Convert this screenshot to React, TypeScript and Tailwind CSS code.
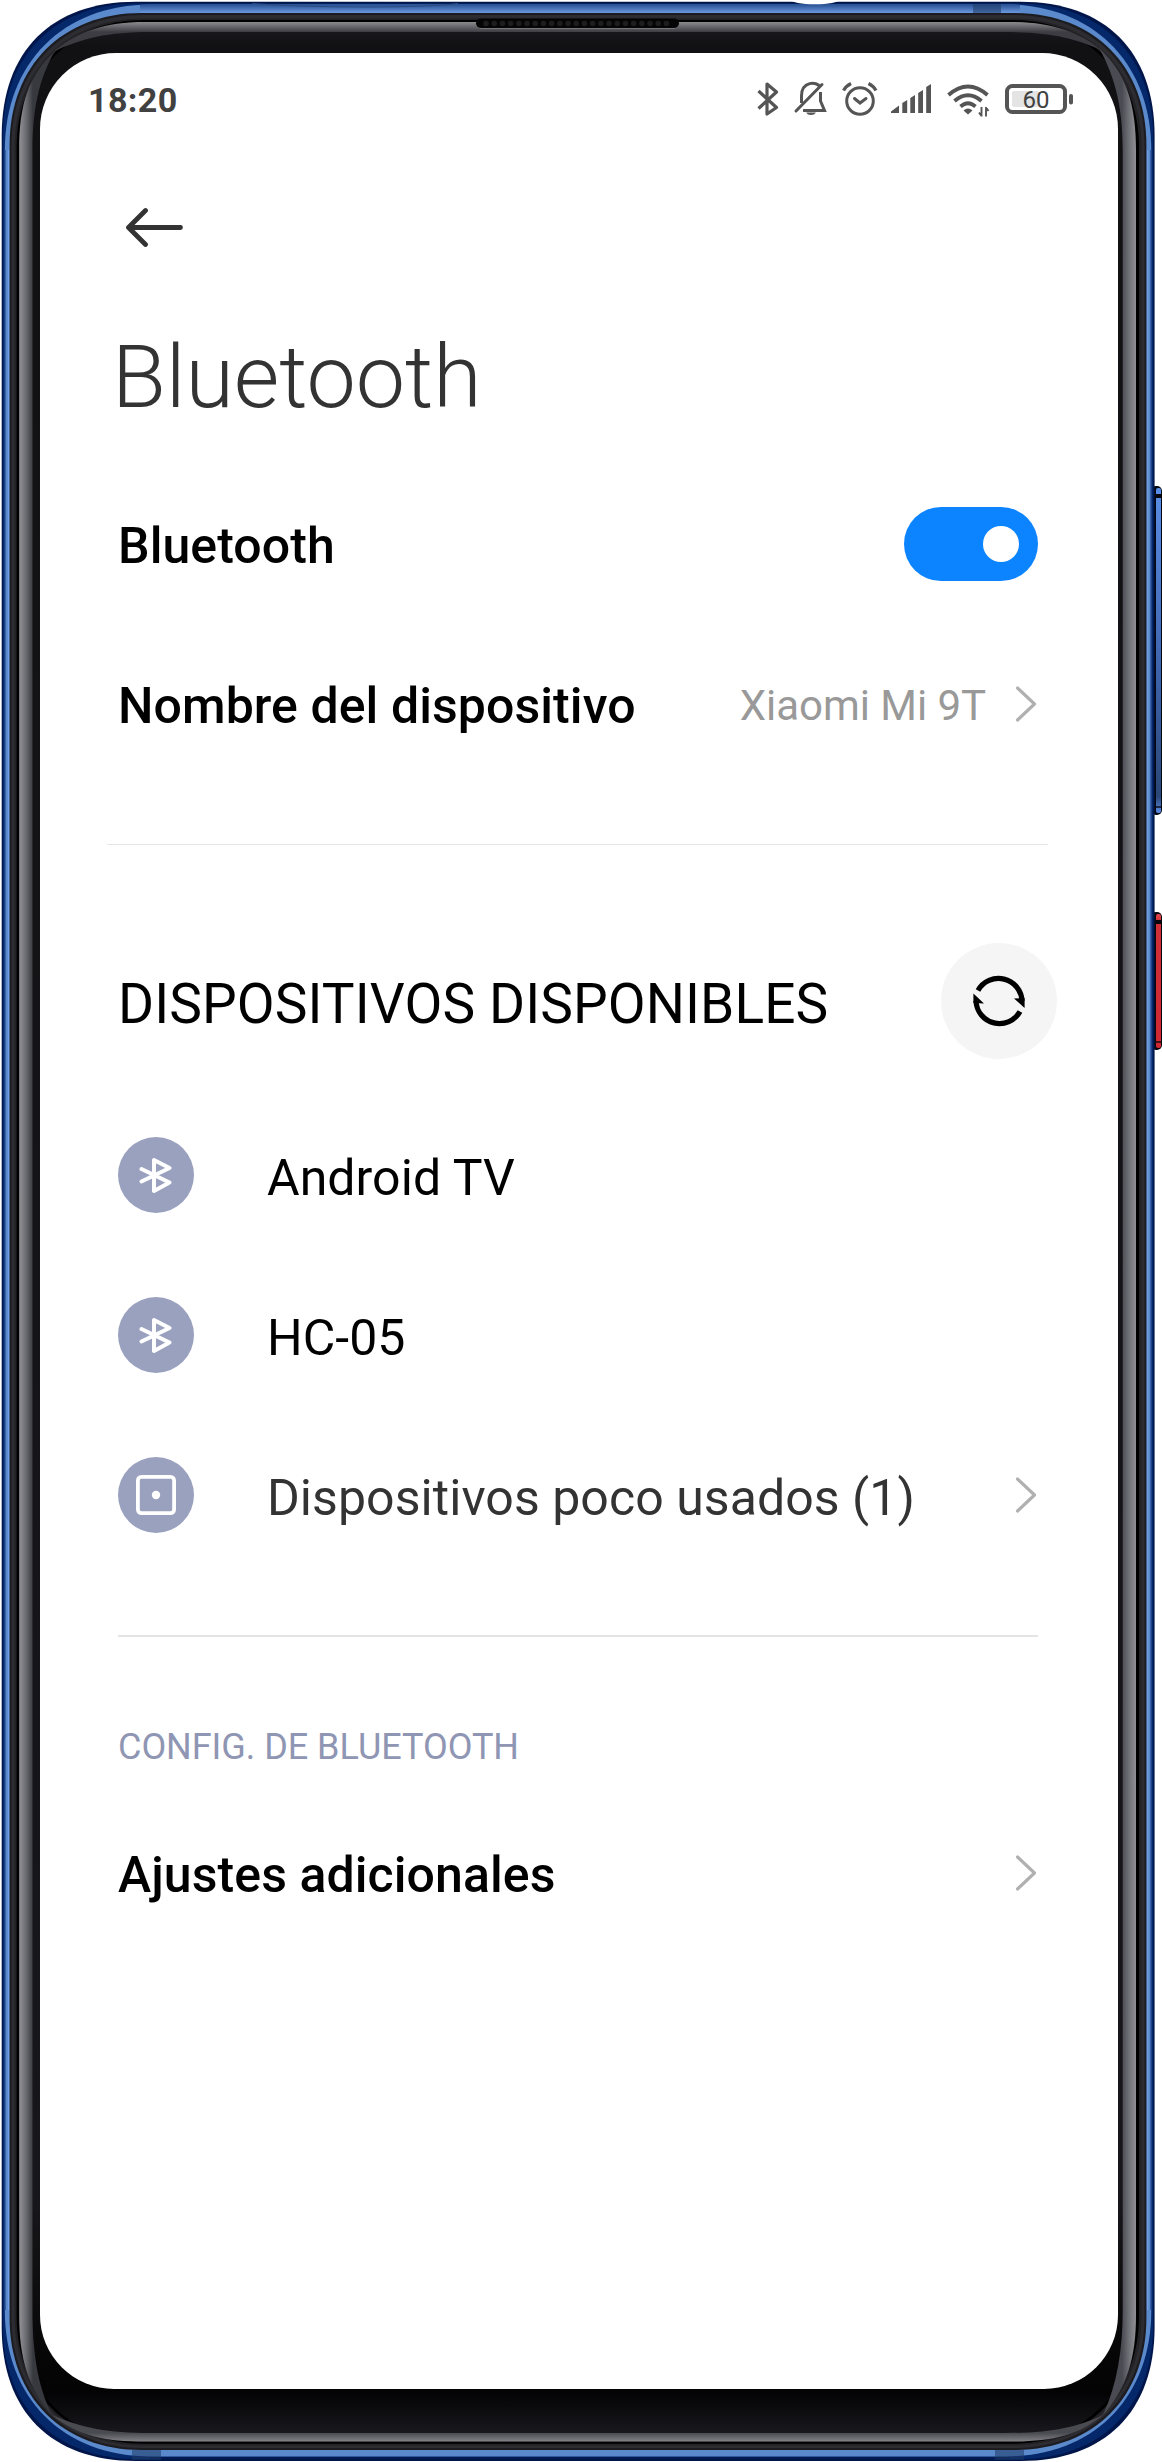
import type { ReactNode } from 'react';

type Box = [left: number, top: number, right: number, bottom: number];

/* Closed outline of a box with a slightly squared-off corner of the given size. */
function outline([l, t, r, b]: Box, s: number, k = 0.6) {
  const c = s * (1 - k);
  return [
    `M${l} ${t + s}`,
    `C${l} ${t + c} ${l + c} ${t} ${l + s} ${t}`,
    `H${r - s}`,
    `C${r - c} ${t} ${r} ${t + c} ${r} ${t + s}`,
    `V${b - s}`,
    `C${r} ${b - c} ${r - c} ${b} ${r - s} ${b}`,
    `H${l + s}`,
    `C${l + c} ${b} ${l} ${b - c} ${l} ${b - s}`,
    'Z',
  ].join(' ');
}

function SideButton({ y, height, id }: { y: number; height: number; id: string }) {
  return (
    <g>
      <rect x="1151" y={y} width="11" height={height} rx="5" fill="#05070f" />
      <rect x="1156" y={y + 2} width="5" height={height - 4} rx="2" fill={`url(#${id})`} />
      <rect x="1155" y={y + 8} width="7" height="4" fill="#05070f" />
      <rect x="1155" y={y + height - 9} width="6" height="2" fill="#05070f" opacity="0.7" />
    </g>
  );
}

function Chassis() {
  return (
    <svg aria-hidden="true" className="absolute inset-0 h-[2462px] w-[1162px]" viewBox="0 0 1162 2462">
      <defs>
        <linearGradient id="vol" x1="0" y1="0" x2="0" y2="1">
          <stop offset="0" stopColor="#5a8de6" />
          <stop offset="0.5" stopColor="#4268b4" />
          <stop offset="0.95" stopColor="#2b4777" />
          <stop offset="1" stopColor="#5a8de6" />
        </linearGradient>
        <linearGradient id="power" x1="0" y1="0" x2="0" y2="1">
          <stop offset="0" stopColor="#e2474f" />
          <stop offset="0.06" stopColor="#cf3038" />
          <stop offset="1" stopColor="#cf2833" />
        </linearGradient>
        <linearGradient id="gl" gradientUnits="userSpaceOnUse" x1="19" y1="0" x2="33" y2="0">
          <stop offset="0" stopColor="#939397" />
          <stop offset="0.5" stopColor="#6b6b72" />
          <stop offset="1" stopColor="#38383f" />
        </linearGradient>
        <linearGradient id="gr" gradientUnits="userSpaceOnUse" x1="1137" y1="0" x2="1122" y2="0">
          <stop offset="0" stopColor="#939397" />
          <stop offset="0.5" stopColor="#73737a" />
          <stop offset="1" stopColor="#4a4a52" />
        </linearGradient>
        <linearGradient id="gt" gradientUnits="userSpaceOnUse" x1="0" y1="22" x2="0" y2="32">
          <stop offset="0" stopColor="#8b8b8f" />
          <stop offset="1" stopColor="#3c3c42" />
        </linearGradient>
        <linearGradient id="gb" gradientUnits="userSpaceOnUse" x1="0" y1="2442" x2="0" y2="2433">
          <stop offset="0" stopColor="#85858a" />
          <stop offset="1" stopColor="#4a4a51" />
        </linearGradient>
        <linearGradient id="face" x1="0" y1="0" x2="0" y2="1">
          <stop offset="0" stopColor="#1c1b21" />
          <stop offset="0.01" stopColor="#111114" />
          <stop offset="0.9" stopColor="#17171b" />
          <stop offset="0.965" stopColor="#060607" />
          <stop offset="0.98" stopColor="#040405" />
          <stop offset="1" stopColor="#1d1c22" />
        </linearGradient>
        <linearGradient id="blueTop" gradientUnits="userSpaceOnUse" x1="0" y1="4" x2="0" y2="13">
          <stop offset="0" stopColor="#244c8e" />
          <stop offset="1" stopColor="#6c9ade" />
        </linearGradient>
      </defs>

      <SideButton y={486} height={329} id="vol" />
      <SideButton y={912} height={138} id="power" />

      {/* blue metal frame */}
      <path d={outline([1.7, 1.8, 1154.6, 2461], 134, 0.63)} fill="#00164a" />
      <path d={outline([2.8, 3.4, 1153.2, 2459], 134, 0.61)} fill="#05286b" />
      <path d={outline([4.8, 4.4, 1151.3, 2456.5], 146, 0.6)} fill="#5b8acc" />
      <path d="M140 4.4H1020V13H140Z" fill="url(#blueTop)" />
      <path d="M8.6 150V2310M1147.6 150V2310" stroke="#6f9fe0" strokeWidth="1.6" fill="none" />
      <path d="M5 150V2310M1151 150V2310" stroke="#1e4688" strokeWidth="1.2" fill="none" />
      <path d="M150 2458.8H1010" stroke="#021a50" strokeWidth="3" />
      <path d="M252 3.5Q300 7 365 7Q430 7 458 3.5" stroke="#2b4a80" strokeWidth="1" fill="none" />
      <path d="M973 4H1001V13H973ZM995 2450H1024V2460H995ZM132 2450H161V2460H132Z" fill="#1d3a66" opacity="0.55" />
      <ellipse cx="815" cy="0" rx="24" ry="4.2" fill="#fff" />

      {/* dark gasket and the black seam inside it */}
      <path d={outline([9.6, 13, 1146.4, 2450], 132, 0.6)} fill="#1c1c20" />
      <path d={outline([11.5, 15, 1144.5, 2448], 131, 0.6)} fill="#2c2c31" />
      <path d={outline([14.5, 18.5, 1141.5, 2445.5], 129, 0.6)} fill="#222226" />
      <path d={outline([16.6, 20, 1139, 2443.8], 128, 0.6)} fill="#000" />
      <path d={outline([19.2, 22, 1136, 2441.6], 126, 0.6)} fill="url(#face)" />

      {/* glass edge reflections */}
      <path d="M19.2 150C19.2 105 28 76 55 51C38 80 32.5 112 32.5 150V2310C32.5 2350 37 2385 52 2415C28 2388 19.2 2358 19.2 2315Z" fill="url(#gl)" />
      <path d="M1136 150C1136 105 1127 74 1099 48C1117 80 1122.7 112 1122.7 150V2310C1122.7 2350 1117 2385 1103 2415C1127 2388 1136 2358 1136 2315Z" fill="url(#gr)" />
      <path d="M145 22C105 22 78 31 53 52C82 38 108 32 150 32H1005C1050 32 1075 38 1101 50C1078 31 1050 22 1010 22Z" fill="url(#gt)" />
      <path d="M145 2441.6C105 2441.6 78 2436 52 2415C82 2428 108 2433 150 2433H1005C1050 2433 1075 2428 1103 2415C1078 2436 1050 2441.6 1010 2441.6Z" fill="url(#gb)" />

      {/* earpiece */}
      <rect x="476" y="18.5" width="203" height="9.5" rx="4.7" fill="#050506" />
      <path d="M486 23.5H672" stroke="#1d1d20" strokeWidth="5.5" strokeLinecap="round" strokeDasharray="0.1 8.1" />
      <path d="M480 28.5H675" stroke="#77777b" strokeWidth="1" />
    </svg>
  );
}

function BluetoothMark() {
  return (
    <svg className="h-[37px] w-[35px]" viewBox="0 0 35 37" fill="none" stroke="#fff" strokeWidth="4" strokeLinecap="round" strokeLinejoin="round">
      <path d="M2.500 12L30.500 25.500L15 34V3L30.500 11L2.500 24.500" />
    </svg>
  );
}

function StoredMark() {
  return (
    <svg className="h-10 w-10" viewBox="0 0 40 40" fill="none">
      <rect x="1.9" y="1.9" width="36.2" height="36.2" rx="3.5" stroke="#fff" strokeWidth="3.8" />
      <circle cx="20" cy="20" r="4.2" fill="#fff" />
    </svg>
  );
}

function Chevron() {
  return (
    <svg className="h-[38px] w-[22px] shrink-0" viewBox="0 0 22 38" fill="none" stroke="#b0b0b0" strokeWidth="3.100" strokeLinecap="round" strokeLinejoin="round">
      <path d="M1.5 3L18.500 19L1.5 35" />
    </svg>
  );
}

function StatusIcons() {
  return (
    <svg className="h-[40px] w-[320px]" viewBox="755 80 320 40" fill="none" stroke="#555" strokeWidth="3">
      <path d="M758.5 91L776.5 107.5L767 114V84L776.5 92L758.5 108.5" strokeWidth="3.200" strokeLinejoin="round" />
      <path d="M801.5 103V96C801.5 81 817 81 820 87" />
      <path d="M796 111L822 84.5" strokeLinecap="round" />
      <path d="M820.5 92V101L824.5 110.5H803" />
      <path d="M806 112.5H816Q814.5 115 811 115Q807.500 115 806 112.5Z" fill="#555" stroke="none" />
      <circle cx="860" cy="101" r="13.3" />
      <path d="M854.500 98.500L860 103L866 98.500" strokeLinecap="round" />
      <path d="M843.500 90.500Q846 86 851 83.500M876 90.500Q873.500 86 868.500 83.500" strokeWidth="3.200" />
      <path d="M891 111.500L899 105.500V113H891ZM902.300 103L907.200 100V113H902.300ZM910.300 98L915 95V113H910.300ZM918.200 93L923 90V113H918.200ZM926.200 87L931 84V113H926.200Z" fill="#555" stroke="none" />
      <path d="M948.500 95Q968 78 987.500 95M954.500 101Q968 89.500 981.500 101M960.500 106.500Q968 100 975.500 106.500" strokeWidth="3.800" />
      <path d="M963.500 110.500Q968 106.500 972.500 110.500L968 114.500Z" fill="#555" stroke="none" />
      <path d="M981.500 107V116.500M979 112.500L981.500 116M986 116.500V107M988.500 111L986 107.500" strokeWidth="1.900" />
      <rect x="1007" y="86" width="58" height="26" rx="5.500" strokeWidth="4" />
      <rect x="1012" y="91" width="27" height="16" rx="2" fill="#e4e4e4" stroke="none" />
      <rect x="1069" y="94" width="4" height="10.500" rx="2" fill="#555" stroke="none" />
    </svg>
  );
}

function Row({ children, className = '' }: { children: ReactNode; className?: string }) {
  return <div className={`flex h-40 items-center ${className}`}>{children}</div>;
}

function RowTitle({ children }: { children: ReactNode }) {
  return <h2 className="pt-1 text-[50px] font-medium tracking-[0.08px]">{children}</h2>;
}

function Badge({ children }: { children: ReactNode }) {
  return (
    <span className="flex size-19 shrink-0 items-center justify-center rounded-full bg-[#9aa1be]">{children}</span>
  );
}

export default function App() {
  return (
    <div className="relative h-[2462px] w-[1162px] overflow-hidden bg-white pt-[53px] pl-10 font-['Roboto',sans-serif] text-black">
      <Chassis />
      <main className="relative flex h-[2336px] w-[1078px] flex-col rounded-t-[76px] rounded-b-[74px] bg-white">
        <header className="flex h-[94px] items-center justify-between pr-[43px] pl-12">
          <time className="text-[34px] font-bold leading-none tracking-[0.4px] text-[#414141]">18:20</time>
          <div className="relative h-10 w-[320px]">
            <StatusIcons />
            <span className="absolute top-2 left-[250px] w-[62px] text-center text-[24px] leading-6 text-[#414141]">60</span>
          </div>
        </header>

        <button aria-label="Volver" className="mt-[60px] ml-[84px] h-10 w-[60px]">
          <svg className="h-10 w-[60px]" viewBox="0 0 60 40" fill="none" stroke="#333" strokeWidth="4.800" strokeLinecap="round" strokeLinejoin="round">
            <path d="M56.500 20.500H5M21.500 3.500L4.500 20.500L21.500 37.500" />
          </svg>
        </button>

        <h1 className="mt-20 ml-[72px] text-[88px] font-light leading-[100px] tracking-[-0.1px] text-[#333]">Bluetooth</h1>

        <section className="mt-[37px] pr-20 pl-[78px]">
          <Row className="justify-between">
            <RowTitle>Bluetooth</RowTitle>
            <button role="switch" aria-checked="true" className="flex h-[74px] w-[134px] items-center justify-end rounded-full bg-[#0d84ff] pr-[19px]">
              <span className="size-9 rounded-full bg-white" />
            </button>
          </Row>
          <Row className="justify-between">
            <RowTitle>Nombre del dispositivo</RowTitle>
            <div className="flex items-center gap-[30px]">
              <span className="pt-[3px] text-[42px] tracking-[-0.05px] text-[#999]">Xiaomi Mi 9T</span>
              <Chevron />
            </div>
          </Row>
        </section>

        <hr className="mt-[60px] mr-[70px] ml-[67px] border-[#e6e6e6]" />

        <section className="mt-[98px] pr-20 pl-[78px]">
          <div className="-mr-[19px] flex h-[116px] items-center justify-between">
            <h2 className="pt-1.5 text-[55px] tracking-[0.1px]">DISPOSITIVOS DISPONIBLES</h2>
            <button aria-label="Actualizar" className="flex size-29 items-center justify-center rounded-full bg-[#f5f5f5]">
              <svg className="size-14" viewBox="0 0 56 56" fill="none" stroke="#000" strokeWidth="5.200">
                <path d="M7 17.500A23.500 23.500 0 0 1 51 28M49 38.500A23.500 23.500 0 0 1 5 28" />
                <path d="M43 25.500L53.600 25V35ZM2.400 20.500L13 30.500L2.400 30Z" fill="#000" stroke="none" />
              </svg>
            </button>
          </div>
          <ul className="mt-9 text-[50px] tracking-[0.06px]">
            <li><Row className="gap-[73px]"><Badge><BluetoothMark /></Badge><span className="pt-1.5">Android TV</span></Row></li>
            <li><Row className="gap-[73px]"><Badge><BluetoothMark /></Badge><span className="pt-1.5">HC-05</span></Row></li>
            <li>
              <Row className="gap-[73px]">
                <Badge><StoredMark /></Badge>
                <span className="flex-1 pt-1.5 text-[#333]">Dispositivos poco usados (1)</span>
                <Chevron />
              </Row>
            </li>
          </ul>
        </section>

        <hr className="mt-[60px] mr-20 ml-[78px] border-t-2 border-[#e4e4e4]" />

        <section className="mt-[86px] pr-20 pl-[78px]">
          <h3 className="text-[36px] leading-[48px] tracking-[-0.04px] text-[#8f96b3]">CONFIG. DE BLUETOOTH</h3>
          <Row className="mt-[22px] justify-between">
            <RowTitle>Ajustes adicionales</RowTitle>
            <Chevron />
          </Row>
        </section>
      </main>
    </div>
  );
}
